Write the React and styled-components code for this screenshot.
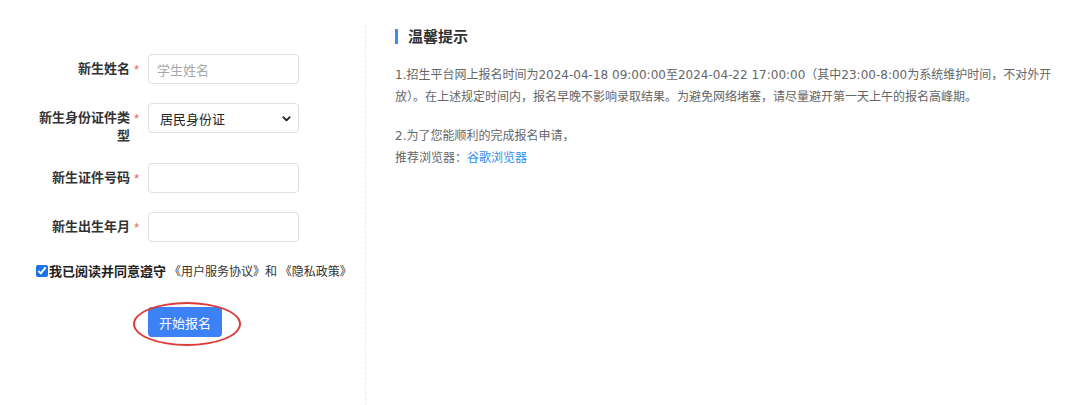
import React from 'react'
import styled, { createGlobalStyle } from 'styled-components'

const GlobalStyle = createGlobalStyle`
  html, body {
    margin: 0;
    padding: 0;
    background: #fff;
    font-family: "Noto Sans CJK SC", "Noto Sans", sans-serif;
    color: #333;
  }
`

const Page = styled.div`
  display: flex;
  align-items: stretch;
  width: 1080px;
  height: 405px;
  padding-top: 25px;
  box-sizing: border-box;
  overflow: hidden;
`

const FormPanel = styled.div`
  width: 366px;
  flex-shrink: 0;
  border-right: 1px dashed #ececec;
  padding-top: 29px;
  box-sizing: border-box;
`

const Row = styled.div`
  display: flex;
  align-items: flex-start;
  margin-bottom: 19px;
`

const LabelCell = styled.div`
  width: 148px;
  display: flex;
  justify-content: flex-end;
  align-items: flex-start;
  padding-top: 5px;
  padding-right: 9px;
  box-sizing: border-box;
`

const LabelText = styled.span`
  max-width: 92px;
  text-align: right;
  font-size: 13px;
  font-weight: bold;
  line-height: 18px;
  color: #333;
`

const Star = styled.span`
  color: #e06a6a;
  font-family: "Liberation Sans", sans-serif;
  font-size: 13px;
  line-height: 18px;
  padding-top: 2px;
  margin-left: 4px;
`

const TextInput = styled.input`
  width: 151px;
  height: 30px;
  box-sizing: border-box;
  border: 1px solid #dcdfe6;
  border-radius: 4px;
  padding: 0 8px;
  font-family: inherit;
  font-size: 13px;
  color: #333;
  outline: none;
  &::placeholder {
    color: #a8a8a8;
  }
`

const SelectBox = styled.div`
  width: 151px;
  height: 30px;
  box-sizing: border-box;
  border: 1px solid #dcdfe6;
  border-radius: 4px;
  display: flex;
  align-items: center;
  justify-content: space-between;
  padding: 0 6px 0 11px;
  font-size: 13px;
  color: #222;
`

const AgreeRow = styled.label`
  display: flex;
  align-items: center;
  padding-left: 36px;
  margin-top: 15px;
  font-size: 12px;
  color: #333;
  white-space: nowrap;
  input {
    margin: 0 1px 0 0;
    width: 12px;
    height: 12px;
    accent-color: #1a73e8;
  }
`

const AgreeBold = styled.span`
  font-weight: bold;
  font-size: 13px;
  color: #222;
  margin-right: 3px;
`

const ButtonWrap = styled.div`
  position: relative;
  margin: 27px 0 0 148px;
  width: 74px;
`

const SubmitButton = styled.button`
  width: 74px;
  height: 30px;
  border: none;
  border-radius: 4px;
  background: #3c82f6;
  color: #fff;
  font-family: inherit;
  font-size: 13px;
  cursor: pointer;
`

const Circle = styled.div`
  position: absolute;
  left: -15px;
  top: -5px;
  width: 104px;
  height: 40px;
  border: 2px solid #dd3a3a;
  border-radius: 50%;
  pointer-events: none;
`

const TipsPanel = styled.div`
  flex: 1;
  padding: 0 18px 0 29px;
`

const TipsTitle = styled.h3`
  margin: 0;
  display: flex;
  align-items: center;
  font-size: 15px;
  font-weight: bold;
  line-height: 22px;
  color: #333;
  &::before {
    content: '';
    width: 3px;
    height: 15px;
    background: #3c8cf0;
    margin-right: 10px;
  }
`

const Paragraph = styled.p`
  margin: ${p => p.$top}px 0 0;
  font-family: "DejaVu Sans", "Noto Sans CJK SC", sans-serif;
  font-size: 12px;
  line-height: 22px;
  color: #666;
`

const Link = styled.a`
  color: #2f8cf0;
  text-decoration: none;
`

function Field({ label, children }) {
  return (
    <Row>
      <LabelCell>
        <LabelText>{label}</LabelText>
        <Star>*</Star>
      </LabelCell>
      {children}
    </Row>
  )
}

export default function App() {
  return (
    <Page>
      <GlobalStyle />
      <FormPanel>
        <Field label="新生姓名">
          <TextInput placeholder="学生姓名" />
        </Field>
        <Field label="新生身份证件类型">
          <SelectBox>
            <span>居民身份证</span>
            <svg width="11" height="11" viewBox="0 0 12 12">
              <path d="M2.5 4.5 L6 8 L9.5 4.5" fill="none" stroke="#222" strokeWidth="2" strokeLinecap="round" strokeLinejoin="round" />
            </svg>
          </SelectBox>
        </Field>
        <Field label="新生证件号码">
          <TextInput />
        </Field>
        <Field label="新生出生年月">
          <TextInput />
        </Field>
        <AgreeRow>
          <input type="checkbox" defaultChecked />
          <AgreeBold>我已阅读并同意遵守</AgreeBold>
          《用户服务协议》和 《隐私政策》
        </AgreeRow>
        <ButtonWrap>
          <SubmitButton>开始报名</SubmitButton>
          <Circle />
        </ButtonWrap>
      </FormPanel>
      <TipsPanel>
        <TipsTitle>温馨提示</TipsTitle>
        <Paragraph $top={17}>
          1.招生平台网上报名时间为2024-04-18 09:00:00至2024-04-22 17:00:00（其中23:00-8:00为系统维护时间，不对外开放）。在上述规定时间内，报名早晚不影响录取结果。为避免网络堵塞，请尽量避开第一天上午的报名高峰期。
        </Paragraph>
        <Paragraph $top={17}>
          2.为了您能顺利的完成报名申请，<br />
          推荐浏览器：<Link href="#">谷歌浏览器</Link>
        </Paragraph>
      </TipsPanel>
    </Page>
  )
}
